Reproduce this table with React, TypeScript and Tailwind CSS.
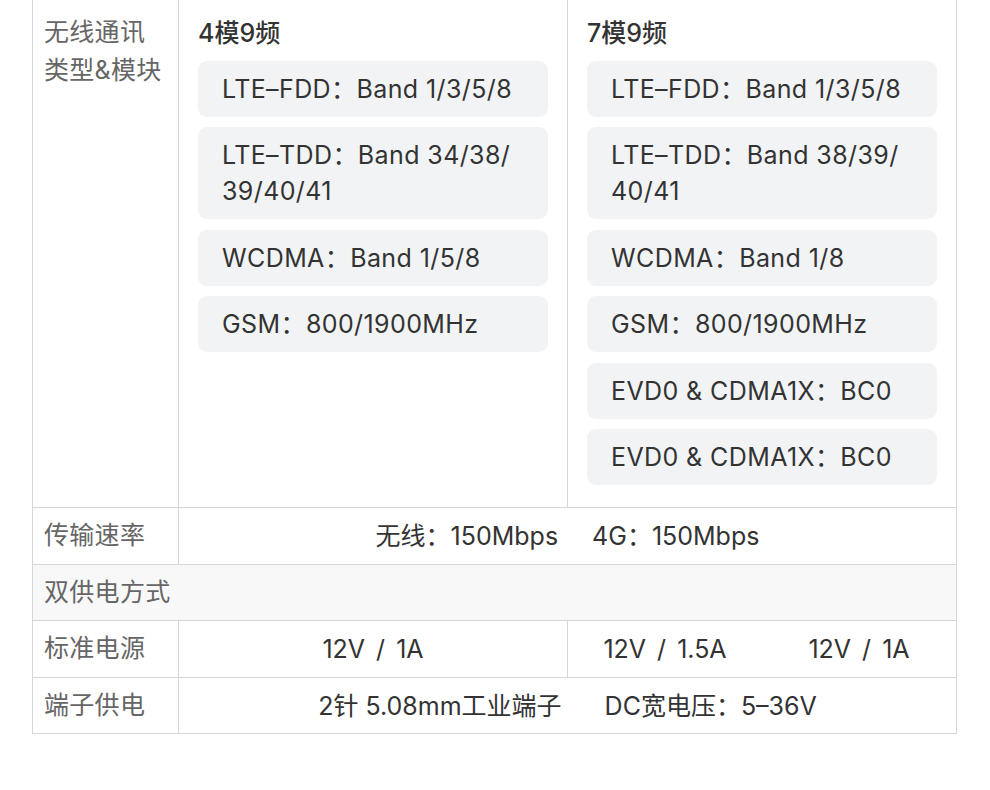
const font = "font-[Inter,'Noto_Sans_CJK_SC',sans-serif]";

const fourModes = [
  ['LTE–FDD：Band 1/3/5/8'],
  ['LTE–TDD：Band 34/38/', '39/40/41'],
  ['WCDMA：Band 1/5/8'],
  ['GSM：800/1900MHz'],
];

const sevenModes = [
  ['LTE–FDD：Band 1/3/5/8'],
  ['LTE–TDD：Band 38/39/', '40/41'],
  ['WCDMA：Band 1/8'],
  ['GSM：800/1900MHz'],
  ['EVD0 & CDMA1X：BC0'],
  ['EVD0 & CDMA1X：BC0'],
];

function BandCard({ lines }: { lines: string[] }) {
  return (
    <div className="rounded-[9px] bg-[#f2f3f5] px-[24px] py-[10px] text-[25px] leading-[36px] tracking-[0.4px] text-[#333]">
      {lines.map((l, i) => (
        <div key={i} className="whitespace-nowrap">
          {l}
        </div>
      ))}
    </div>
  );
}

function ModeColumn({ title, items, last }: { title: string; items: string[][]; last?: boolean }) {
  return (
    <div className={`flex flex-col px-[19px] pt-[15px] ${last ? 'flex-1' : 'w-[389px] border-r border-[#d6d6d6]'}`}>
      <div className="mb-[10px] text-[25px] font-medium leading-[36px] text-[#333]">{title}</div>
      <div className="flex flex-col gap-[10.4px]">
        {items.map((lines, i) => (
          <BandCard key={i} lines={lines} />
        ))}
      </div>
    </div>
  );
}

function Label({ children }: { children: React.ReactNode }) {
  return (
    <div className="flex w-[146px] shrink-0 items-center border-r border-[#d6d6d6] pl-[11px] text-[25px] tracking-[0.3px] text-[#666]">
      {children}
    </div>
  );
}

export default function App() {
  return (
    <div className={`min-h-screen bg-white ${font}`}>
      <div className="ml-[32px] w-[925px] border-x border-b border-[#d6d6d6]">
        {/* wireless row */}
        <div className="flex h-[508px] border-b border-[#d6d6d6]">
          <div className="w-[146px] shrink-0 border-r border-[#d6d6d6] pl-[11px] pt-[14px] text-[25px] leading-[37.5px] tracking-[0.3px] text-[#666]">
            <div>无线通讯</div>
            <div>类型&amp;模块</div>
          </div>
          <ModeColumn title="4模9频" items={fourModes} />
          <ModeColumn title="7模9频" items={sevenModes} last />
        </div>

        {/* rate */}
        <div className="flex h-[56.5px] border-b border-[#d6d6d6]">
          <Label>传输速率</Label>
          <div className="flex flex-1 items-center justify-center pt-[2px] text-[25px] text-[#333]">
            <span className="mr-[34px]">无线：150Mbps</span>
            <span>4G：150Mbps</span>
          </div>
        </div>

        {/* dual power header */}
        <div className="flex h-[56.5px] items-center border-b border-[#d6d6d6] bg-[#f8f8f8] pl-[11px] text-[25px] tracking-[0.3px] text-[#666]">
          双供电方式
        </div>

        {/* standard power */}
        <div className="flex h-[56.5px] border-b border-[#d6d6d6]">
          <Label>标准电源</Label>
          <div className="flex w-[389px] items-center justify-center border-r border-[#d6d6d6] pt-[2px] text-[25px] text-[#333] [word-spacing:4px]">
            12V / 1A
          </div>
          <div className="flex flex-1 items-center pt-[2px] text-[25px] text-[#333] [word-spacing:4px]">
            <div className="flex-1 text-center">12V / 1.5A</div>
            <div className="flex-1 text-center">12V / 1A</div>
          </div>
        </div>

        {/* terminal power */}
        <div className="flex h-[55.5px]">
          <Label>端子供电</Label>
          <div className="flex flex-1 items-center justify-center pt-[2px] text-[25px] text-[#333]">
            <span className="mr-[43px]">2针 5.08mm工业端子</span>
            <span>DC宽电压：5–36V</span>
          </div>
        </div>
      </div>
    </div>
  );
}
